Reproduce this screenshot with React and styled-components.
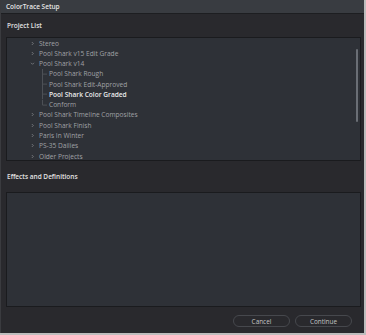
import React from "react";
import styled, { createGlobalStyle } from "styled-components";

const Global = createGlobalStyle`
  html, body { margin: 0; padding: 0; background: #bdbdbd; }
  body { font-family: "Open Sans", "Noto Sans", sans-serif; }
  #root { width: 366px; height: 335px; }
`;

const Window = styled.div`
  width: 364px;
  height: 333px;
  background: #29292d;
  display: flex;
  flex-direction: column;
  box-sizing: border-box;
  border-left: 1px solid #3a3b3f;
`;

const TitleBar = styled.div`
  height: 13px;
  flex: none;
  background: #393c41;
  border-top: 1px solid #50535a;
  border-bottom: 1px solid #1d1e21;
  box-sizing: content-box;
  margin-top: -1px;
  display: flex;
  align-items: center;
  padding-left: 5px;
  color: #e6e6e6;
  font-size: 6.5px;
  font-weight: 600;
`;

const Body = styled.div`
  flex: 1;
  display: flex;
  flex-direction: column;
  padding: 0 3px 0 5px;
`;

const Label = styled.div`
  height: ${(p) => p.$h}px;
  flex: none;
  display: flex;
  align-items: center;
  color: #e2e2e2;
  font-size: 6.5px;
  font-weight: 600;
  padding-left: 1px;
`;

const Panel = styled.div`
  position: relative;
  height: ${(p) => p.$h}px;
  flex: none;
  box-sizing: border-box;
  background: #2e3137;
  border: 1px solid #1a1b1e;
  overflow: hidden;
`;

const Thumb = styled.div`
  position: absolute;
  right: 2px;
  top: 11px;
  width: 2px;
  height: 73px;
  border-radius: 1px;
  background: #6a6e75;
`;

const Row = styled.div`
  height: 10.27px;
  display: flex;
  align-items: center;
  padding-left: ${(p) => p.$indent}px;
  font-size: 6.6px;
  white-space: nowrap;
  color: ${(p) => (p.$active ? "#ececec" : "#a0a2a6")};
  font-weight: ${(p) => (p.$active ? 600 : 400)};
`;

const Chevron = styled.svg`
  width: 5px;
  height: 5px;
  margin-right: 4px;
  flex: none;
`;

const Guide = styled.svg`
  width: 6px;
  height: 10.27px;
  margin-right: 1px;
  flex: none;
`;

const Footer = styled.div`
  flex: 1;
  display: flex;
  justify-content: flex-end;
  align-items: flex-start;
  gap: 5px;
  padding: 8px 9px 0 0;
`;

const Button = styled.button`
  width: 57px;
  height: 12px;
  box-sizing: border-box;
  border: 1px solid #46484d;
  border-radius: 6px;
  background: #29292d;
  color: #c4c4c4;
  font-family: "Open Sans", "Noto Sans", sans-serif;
  font-size: 6.4px;
  padding: 0;
  display: flex;
  align-items: center;
  justify-content: center;
`;

const Right = () => (
  <Chevron viewBox="0 0 5 5">
    <path d="M1.8 1 L3.3 2.5 L1.8 4" fill="none" stroke="#8c8e92" strokeWidth="0.7" />
  </Chevron>
);

const Down = () => (
  <Chevron viewBox="0 0 5 5">
    <path d="M1 1.8 L2.5 3.3 L4 1.8" fill="none" stroke="#8c8e92" strokeWidth="0.7" />
  </Chevron>
);

const Connector = ({ last }) => (
  <Guide viewBox="0 0 6 10.27">
    <line x1="0.5" y1="0" x2="0.5" y2={last ? 5.1 : 10.27} stroke="#4d5056" strokeWidth="1" />
    <line x1="0.5" y1="5.1" x2="5" y2="5.1" stroke="#4d5056" strokeWidth="1" />
  </Guide>
);

const tree = [
  { name: "Stereo", open: false },
  { name: "Pool Shark v15 Edit Grade", open: false },
  {
    name: "Pool Shark v14",
    open: true,
    children: [
      { name: "Pool Shark Rough" },
      { name: "Pool Shark Edit-Approved" },
      { name: "Pool Shark Color Graded", active: true },
      { name: "Conform" },
    ],
  },
  { name: "Pool Shark Timeline Composites", open: false },
  { name: "Pool Shark Finish", open: false },
  { name: "Paris In Winter", open: false },
  { name: "PS-35 Dailies", open: false },
  { name: "Older Projects", open: false },
];

export default function App() {
  return (
    <>
      <Global />
      <Window>
        <TitleBar>ColorTrace Setup</TitleBar>
        <Body>
          <Label $h={23}>Project List</Label>
          <Panel $h={124}>
            {tree.map((item) => (
              <React.Fragment key={item.name}>
                <Row $indent={23}>
                  {item.open ? <Down /> : <Right />}
                  {item.name}
                </Row>
                {item.open &&
                  item.children.map((c, i) => (
                    <Row key={c.name} $indent={35} $active={c.active}>
                      <Connector last={i === item.children.length - 1} />
                      {c.name}
                    </Row>
                  ))}
              </React.Fragment>
            ))}
            <Thumb />
          </Panel>
          <Label $h={31}>Effects and Definitions</Label>
          <Panel $h={115} />
          <Footer>
            <Button>Cancel</Button>
            <Button>Continue</Button>
          </Footer>
        </Body>
      </Window>
    </>
  );
}
